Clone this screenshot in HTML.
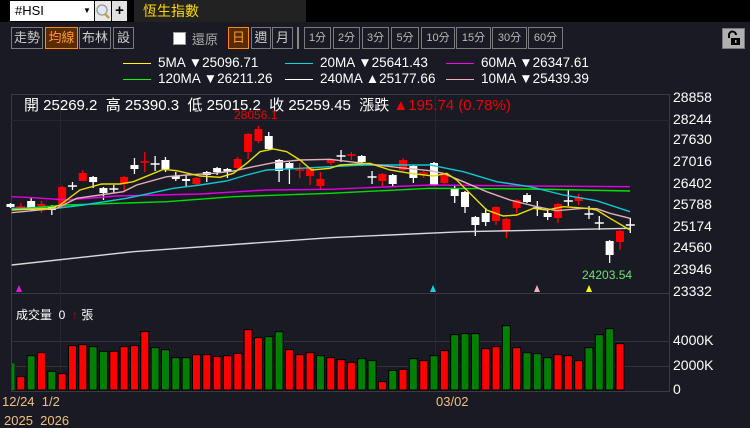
<!DOCTYPE html>
<html><head><meta charset="utf-8"><style>
*{margin:0;padding:0;box-sizing:border-box}
body{width:750px;height:423px;background:#1a1a24;overflow:hidden;position:relative;font-family:"Liberation Sans","Noto Sans CJK TC",sans-serif;color:#fff}
.abs{position:absolute}
.btn{position:absolute;top:27px;height:22px;border:1px solid #7a7a7a;color:#ccc;font-size:13px;line-height:20px;text-align:center}
.on{background:#5a2a00;border-color:#ff8a1a;color:#ff9a30}
.sm{font-size:11px;color:#bbb}
.leg{position:absolute;font-size:13.5px;color:#fff;white-space:nowrap}
.ln{position:absolute;height:1px;width:28px}
.ax{position:absolute;left:673px;font-size:14px;color:#fff}
</style></head><body>
<div class="abs" style="left:0;top:0;width:750px;height:22px;background:#000"></div>
<div class="abs" style="left:10px;top:1px;width:84px;height:20px;background:#fff;color:#000;font-size:13px;line-height:20px;padding-left:5px">#HSI<span style="position:absolute;left:73px;top:0;font-size:8px">▼</span></div>
<div class="abs" style="left:95px;top:1px;width:16px;height:20px;background:#e8e8e8"><svg width="16" height="20"><circle cx="7" cy="9" r="5" fill="#dfe8f0" stroke="#999" stroke-width="1.3"/><line x1="10" y1="13" x2="14" y2="17" stroke="#c8a040" stroke-width="2.5"/></svg></div>
<div class="abs" style="left:112px;top:1px;width:15px;height:20px;background:#e0e0e0;color:#000;font-size:15px;font-weight:bold;line-height:20px;text-align:center">+</div>
<div class="abs" style="left:134px;top:0;width:172px;height:22px;background:#222;color:#ffd800;font-size:14px;line-height:22px;padding-left:9px">恆生指數</div>

<div class="btn" style="left:11px;width:32px">走勢</div>
<div class="btn on" style="left:45px;width:33px">均線</div>
<div class="btn" style="left:79px;width:32px">布林</div>
<div class="btn" style="left:113px;width:21px">設</div>
<div class="abs" style="left:173px;top:32px;width:13px;height:13px;background:#fff;border:1px solid #999"></div>
<div class="abs" style="left:192px;top:29px;font-size:13px;color:#aaa">還原</div>
<div class="btn on" style="left:228px;width:21px">日</div>
<div class="btn" style="left:251px;width:20px">週</div>
<div class="btn" style="left:272px;width:21px">月</div>
<div class="abs" style="left:297px;top:27px;width:2px;height:22px;background:#888"></div>
<div class="btn sm" style="left:304px;width:27px">1分</div>
<div class="btn sm" style="left:333px;width:27px">2分</div>
<div class="btn sm" style="left:362px;width:27px">3分</div>
<div class="btn sm" style="left:391px;width:28px">5分</div>
<div class="btn sm" style="left:421px;width:34px">10分</div>
<div class="btn sm" style="left:456px;width:35px">15分</div>
<div class="btn sm" style="left:492px;width:35px">30分</div>
<div class="btn sm" style="left:528px;width:35px">60分</div>
<div class="abs" style="left:722px;top:28px;width:23px;height:21px;background:#b0b0b0;border:1px solid #777"><svg width="22" height="20"><path d="M6 9 V6 a3.5 3.5 0 0 1 7 0" fill="none" stroke="#000" stroke-width="2"/><rect x="8" y="9" width="9" height="7" fill="#000"/><rect x="12" y="11" width="1.5" height="3" fill="#b0b0b0"/></svg></div>

<div class="ln" style="left:123px;top:63px;background:#ff0"></div><div class="leg" style="left:158px;top:55px">5MA ▼25096.71</div>
<div class="ln" style="left:285px;top:63px;background:#0dd"></div><div class="leg" style="left:320px;top:55px">20MA ▼25641.43</div>
<div class="ln" style="left:446px;top:63px;background:#f0f"></div><div class="leg" style="left:481px;top:55px">60MA ▼26347.61</div>
<div class="ln" style="left:123px;top:79px;background:#0f0"></div><div class="leg" style="left:158px;top:71px">120MA ▼26211.26</div>
<div class="ln" style="left:285px;top:79px;background:#fff"></div><div class="leg" style="left:320px;top:71px">240MA ▲25177.66</div>
<div class="ln" style="left:446px;top:79px;background:#f0b0b8"></div><div class="leg" style="left:481px;top:71px">10MA ▼25439.39</div>

<svg class="abs" style="left:0;top:0" width="750" height="423" id="c">
<rect x="11.5" y="94.5" width="658" height="297" fill="none" stroke="#3a3a44"/>
<line x1="11" y1="293.5" x2="670" y2="293.5" stroke="#3a3a44"/>
<line x1="60.5" y1="95" x2="60.5" y2="391" stroke="#262630"/>
<line x1="435.5" y1="95" x2="435.5" y2="391" stroke="#262630"/>
<line x1="11" y1="341.5" x2="670" y2="341.5" stroke="#333"/>
<line x1="11" y1="366.5" x2="670" y2="366.5" stroke="#333"/>
<line x1="11" y1="120.5" x2="670" y2="120.5" stroke="#262630"/>
<g id="g"></g>
<polygon points="16,292 19,285 22,292" fill="#e020e0"/>
<polygon points="430,292 433,285 436,292" fill="#20d0e0"/>
<polygon points="534,292 537,285 540,292" fill="#f0b0c0"/>
<polygon points="586,292 589,285 592,292" fill="#ff0"/>
</svg>

<div class="abs" style="left:24px;top:94px;font-size:15px;color:#fff;white-space:nowrap">開 25269.2&nbsp; 高 25390.3&nbsp; 低 25015.2&nbsp; 收 25259.45&nbsp; 漲跌 <span style="color:#e00">▲195.74 (0.78%)</span></div>
<div class="abs" style="left:234px;top:108px;font-size:12px;color:#e00">28056.1</div>
<div class="abs" style="left:582px;top:268px;font-size:12px;color:#70e070">24203.54</div>
<div class="ax" style="top:89px">28858</div><div class="ax" style="top:111px">28244</div><div class="ax" style="top:131px">27630</div><div class="ax" style="top:153px">27016</div><div class="ax" style="top:175px">26402</div><div class="ax" style="top:196px">25788</div><div class="ax" style="top:218px">25174</div><div class="ax" style="top:239px">24560</div><div class="ax" style="top:261px">23946</div><div class="ax" style="top:283px">23332</div>
<div class="ax" style="top:332px">4000K</div><div class="ax" style="top:357px">2000K</div><div class="ax" style="top:381px">0</div>
<div class="abs" style="left:16px;top:306px;font-size:12px;color:#fff">成交量&nbsp; 0 &nbsp;<span style="color:#c00">↑</span> 張</div>
<div class="abs" style="left:2px;top:394px;font-size:13px;color:#f0c080">12/24 &nbsp;1/2</div>
<div class="abs" style="left:436px;top:394px;font-size:13px;color:#f0c080">03/02</div>
<div class="abs" style="left:4px;top:413px;font-size:13px;color:#f0c080">2025 &nbsp;2026</div>
<script>
var g=document.getElementById('g'),h='';
var vol=[[220,'g'],[260,'r'],[197,'g'],[188,'r'],[244,'g'],[251,'r'],[167,'r'],[164,'r'],[170,'g'],[184,'g'],[184,'r'],[170,'r'],[167,'r'],[125,'r'],[173,'g'],[179,'g'],[203,'g'],[203,'g'],[194,'r'],[194,'r'],[200,'r'],[197,'r'],[190,'r'],[119,'r'],[143,'r'],[140,'g'],[125,'g'],[179,'r'],[194,'r'],[188,'r'],[197,'g'],[203,'r'],[209,'r'],[217,'r'],[206,'g'],[212,'g'],[275,'r'],[241,'g'],[238,'r'],[206,'g'],[212,'r'],[197,'g'],[182,'r'],[134,'g'],[131,'g'],[131,'g'],[176,'r'],[170,'r'],[107,'g'],[173,'r'],[188,'g'],[191,'g'],[203,'g'],[194,'r'],[197,'r'],[212,'r'],[173,'g'],[134,'g'],[116,'g'],[161,'r']];
function X(i){return 10.5+i*10.33;}
vol.forEach(function(v,i){var y=290+v[0]/3,x=X(i);if(x<12){h+='<rect x="12" y="'+y+'" width="'+(x+4-12)+'" height="'+(390-y)+'" fill="#008000"/>';return;}
h+='<rect x="'+(x-4)+'" y="'+y+'" width="8" height="'+(390-y)+'" fill="'+(v[1]=='r'?'#ff0000':'#008000')+'" stroke="#000" stroke-width="1"/>';});
var C=[['w',204,207,203,208],['x',207,207,203,210],['w',201,210,197,211],['r',204,210,201,213],['w',206,210,205,215],['r',187,207,186,208],['c',186,186,182,190],['r',173,181,170,181],['w',177,182,176,188],['w',188,193,187,200],['c',189,189,185,193],['r',177,184,176,192],['w',165,169,158,174],['x',162,162,152,172],['c',164,164,156,171],['w',160,169,157,172],['w',176,179,172,181],['w',179,181,175,187],['r',178,184,177,185],['w',172,175,171,182],['w',168,172,167,175],['w',169,172,168,178],['r',159,168,157,170],['r',134,152,133,159],['r',129,141,126,143],['w',136,149,132,150],['w',160,171,159,182],['w',163,169,162,184],['x',170,170,163,178],['r',168,176,167,185],['r',179,186,172,189],['r',160,163,159,165],['c',156,156,150,162],['x',155,155,152,160],['w',156,162,155,166],['c',177,177,171,184],['r',174,181,173,186],['w',175,184,174,187],['r',160,170,158,171],['w',166,178,165,183],['x',173,173,170,178],['w',163,185,162,186],['r',175,183,174,184],['w',188,196,185,203],['w',192,207,191,213],['w',217,225,216,236],['w',213,222,208,226],['r',207,221,206,225],['r',219,231,218,238],['r',200,208,199,213],['w',195,202,193,203],['c',208,208,201,216],['w',213,217,210,220],['r',204,218,203,223],['c',201,201,190,206],['r',197,201,194,205],['c',214,214,206,219],['c',223,223,216,230],['w',241,255,240,263],['r',231,242,230,250],['c',225,225,218,233]];
C.forEach(function(c,i){var x=X(i),col=(c[0]=='r'||c[0]=='x')?'#ff0000':'#ffffff';
h+='<line x1="'+x+'" y1="'+c[3]+'" x2="'+x+'" y2="'+c[4]+'" stroke="'+col+'" stroke-width="1.3"/>';
if(c[0]=='c'||c[0]=='x')h+='<line x1="'+(x-4.5)+'" y1="'+c[1]+'" x2="'+(x+4.5)+'" y2="'+c[1]+'" stroke="'+col+'" stroke-width="1.5"/>';
else h+='<rect x="'+(x-4)+'" y="'+c[1]+'" width="8" height="'+Math.max(2,c[2]-c[1])+'" fill="'+col+'"/>';});
function L(a,b,col){var p=[];a.forEach(function(q){p.push((q[0]/3)+','+(110+q[1]/3));});b.forEach(function(q){p.push((330+q[0]/3)+','+(110+q[1]/3));});
h+='<polyline points="'+p.join(' ')+'" fill="none" stroke="'+col+'" stroke-width="1.4"/>';}
L([[35,465],[400,425],[990,383]],[[0,383],[400,365],[900,355]],'#d8d8d8');
L([[35,298],[200,285],[500,275],[700,260],[990,250]],[[0,250],[300,235],[600,237],[900,243]],'#00e000');
L([[35,260],[100,263],[200,270],[350,258],[600,252],[800,240],[990,238]],[[0,238],[300,225],[600,228],[900,230]],'#e000e0');
L([[35,295],[170,295],[250,285],[380,265],[450,250],[520,235],[600,225],[680,213],[740,195],[800,180],[900,175],[990,170]],[[0,170],[100,165],[300,165],[400,185],[500,215],[600,230],[700,255],[800,272],[900,305]],'#10c8d0');
L([[35,308],[170,295],[230,265],[300,255],[370,245],[410,225],[500,200],[560,195],[640,190],[700,183],[760,170],[820,158],[900,150],[990,148]],[[0,148],[100,160],[200,172],[300,182],[340,190],[400,215],[470,245],[540,270],[620,290],[680,302],[760,295],[800,296],[840,310],[900,325]],'#e0b0b8');
L([[35,300],[150,295],[180,285],[240,240],[305,222],[360,222],[400,215],[490,178],[530,182],[600,198],[660,202],[700,190],[740,160],[780,125],[820,117],[860,125],[900,150],[935,180],[990,175]],[[0,175],[30,165],[120,160],[180,180],[240,190],[310,198],[350,190],[380,210],[420,250],[470,300],[520,318],[560,315],[610,295],[650,300],[700,290],[770,295],[800,300],[840,325],[900,360]],'#e8e000');
g.innerHTML=h;
</script>
</body></html>
